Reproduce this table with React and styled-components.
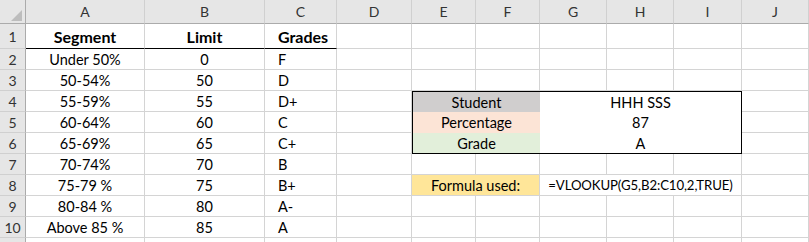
import React from 'react';
import styled, { createGlobalStyle } from 'styled-components';

const GlobalStyle = createGlobalStyle`
    body {
        margin: 0;
        background: #ffffff;
        font-family: Lato, "Liberation Sans", sans-serif;
    }
`;

const Sheet = styled.div`
    display: grid;
    grid-template-columns: 26px 119px 120px 72px 75px 64px 64px 67px 67px 68px 67px;
    grid-template-rows: 24px 25px repeat(10, 21px) 21px;
    width: 809px;
    height: 242px;
    overflow: hidden;
    font-size: 14.5px;
    color: #000;
`;

const ColHead = styled.div`
    box-sizing: border-box;
    display: flex;
    align-items: center;
    justify-content: center;
    background: #e6e6e6;
    border-right: 1px solid #d0d0d0;
    border-bottom: 1px solid #ababab;
    color: #333;
    font-size: 14px;
`;

const Corner = styled(ColHead)`
    position: relative;
    border-right: 1px solid #ababab;
    svg {
        position: absolute;
        left: 11px;
        top: 10px;
    }
`;

const RowHead = styled.div`
    box-sizing: border-box;
    display: flex;
    align-items: center;
    justify-content: center;
    background: #e6e6e6;
    border-right: 1px solid #ababab;
    border-bottom: 1px solid #d0d0d0;
    color: #333;
    font-size: 14px;
`;

const Cell = styled.div`
    box-sizing: border-box;
    display: flex;
    align-items: center;
    justify-content: ${p => (p.$align === 'left' ? 'flex-start' : 'center')};
    padding-left: ${p => (p.$align === 'left' ? '13px' : '0')};
    border-right: 1px solid #d4d4d4;
    border-bottom: ${p => (p.$thick ? '1px solid #000' : '1px solid #d4d4d4')};
    font-weight: ${p => (p.$bold ? 700 : 400)};
    font-size: ${p => (p.$bold ? '16px' : '14.5px')};
    background: ${p => p.$fill || 'transparent'};
    grid-column: ${p => (p.$span ? `span ${p.$span}` : 'auto')};
    white-space: nowrap;
`;

const FormulaCell = styled(Cell)`
    font-size: 13.2px;
    letter-spacing: -0.1px;
`;

const InfoBox = styled.div`
    grid-column: 6 / 11;
    grid-row: 5 / 8;
    display: grid;
    grid-template-columns: 127px 1fr;
    grid-template-rows: 20px 21px 20px;
    border: 1px solid #000;
    background: #fff;
`;

const BoxLabel = styled.div`
    display: flex;
    align-items: center;
    justify-content: center;
    background: ${p => p.$fill};
`;

const BoxValue = styled.div`
    display: flex;
    align-items: center;
    justify-content: center;
`;

const columns = ['A', 'B', 'C', 'D', 'E', 'F', 'G', 'H', 'I', 'J'];

const grades = [
    ['Under 50%', '0', 'F'],
    ['50-54%', '50', 'D'],
    ['55-59%', '55', 'D+'],
    ['60-64%', '60', 'C'],
    ['65-69%', '65', 'C+'],
    ['70-74%', '70', 'B'],
    ['75-79 %', '75', 'B+'],
    ['80-84 %', '80', 'A-'],
    ['Above 85 %', '85', 'A'],
];

const info = [
    ['Student', 'HHH SSS', '#d0cece'],
    ['Percentage', '87', '#fce4d6'],
    ['Grade', 'A', '#e2efda'],
];

// cells in D..J that the box or the formula row already cover
const covered = (row, col) => {
    if (row >= 4 && row <= 6 && col >= 4 && col <= 8) return true;
    if (row === 8 && col >= 4 && col <= 8) return true;
    return false;
};

export default function App() {
    const rows = [];
    for (let r = 1; r <= 11; r++) {
        // row 11 is only a sliver at the bottom edge, its number is out of view
        const cells = [<RowHead key={`h${r}`}>{r <= 10 ? r : ''}</RowHead>];
        if (r === 1) {
            cells.push(<Cell key="a" $bold $thick>Segment</Cell>);
            cells.push(<Cell key="b" $bold $thick>Limit</Cell>);
            cells.push(<Cell key="c" $bold $thick $align="left">Grades</Cell>);
        } else if (r <= 10) {
            const g = grades[r - 2];
            cells.push(<Cell key="a">{g[0]}</Cell>);
            cells.push(<Cell key="b">{g[1]}</Cell>);
            cells.push(<Cell key="c" $align="left">{g[2]}</Cell>);
        } else {
            cells.push(<Cell key="a" />, <Cell key="b" />, <Cell key="c" />);
        }
        for (let c = 3; c < 10; c++) {
            if (r === 8 && c === 4) {
                cells.push(
                    <Cell key="fl" $fill="#ffe699" $span={2}>Formula used:</Cell>,
                    <FormulaCell key="fv" $span={3}>=VLOOKUP(G5,B2:C10,2,TRUE)</FormulaCell>
                );
                continue;
            }
            if (covered(r, c)) continue;
            cells.push(<Cell key={`c${c}`} />);
        }
        rows.push(...cells);
        if (r === 4) {
            rows.push(
                <InfoBox key="box">
                    {info.map(([label, value, fill]) => (
                        <React.Fragment key={label}>
                            <BoxLabel $fill={fill}>{label}</BoxLabel>
                            <BoxValue>{value}</BoxValue>
                        </React.Fragment>
                    ))}
                </InfoBox>
            );
        }
    }

    return (
        <>
            <GlobalStyle />
            <Sheet>
                <Corner>
                    <svg width="11" height="11" viewBox="0 0 11 11">
                        <polygon points="11,0 11,11 0,11" fill="#bdbdbd" />
                    </svg>
                </Corner>
                {columns.map(col => (
                    <ColHead key={col}>{col}</ColHead>
                ))}
                {rows}
            </Sheet>
        </>
    );
}
